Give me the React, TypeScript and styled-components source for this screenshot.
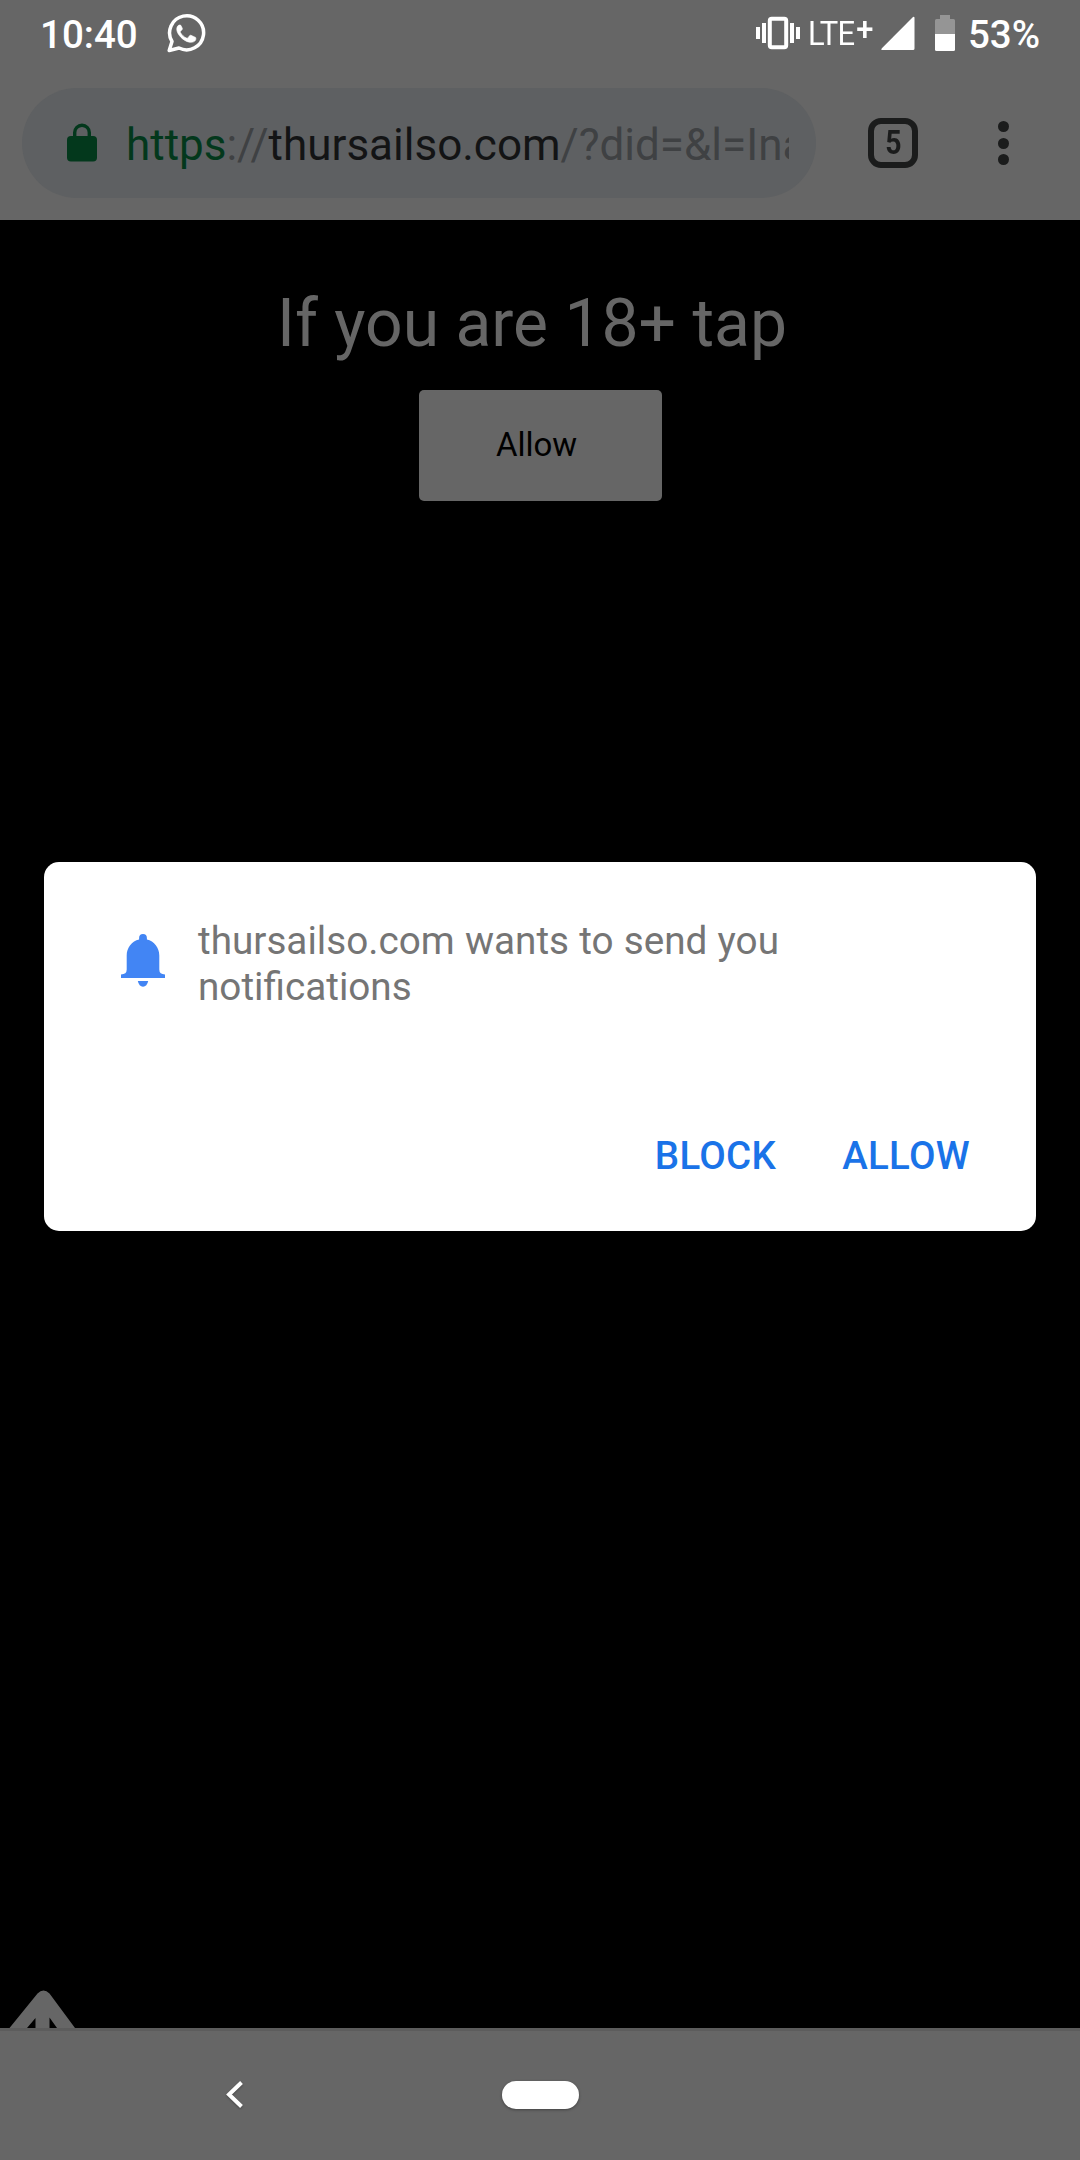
import React from "react";
import styled, { createGlobalStyle } from "styled-components";

const GlobalStyle = createGlobalStyle`
  *, *::before, *::after { box-sizing: border-box; }
  body { margin: 0; background: #000; }
  button { border: 0; padding: 0; background: none; font-family: inherit; }
  svg { display: block; flex: none; }
`;

const Screen = styled.div`
  position: relative;
  display: flex;
  flex-direction: column;
  width: 1080px;
  height: 2160px;
  overflow: hidden;
  background: #000;
  font-family: Roboto, "Liberation Sans", sans-serif;
`;

const StatusBar = styled.header`
  display: flex;
  align-items: flex-start;
  justify-content: space-between;
  height: 66px;
  padding: 13px 40px 0;
  background: #666;
  color: #fff;
`;

const StatusGroup = styled.div`
  display: flex;
  align-items: flex-start;
`;

const StatusText = styled.span<{ $gap?: number }>`
  margin-left: ${(p) => p.$gap ?? 0}px;
  font-size: 38.5px;
  font-weight: 500;
  line-height: 44px;
`;

const Network = styled.span`
  display: flex;
  width: 73px;
  margin-left: 8px;
  font-size: 34px;
  line-height: 40px;
  letter-spacing: -0.8px;
  transform: scaleX(0.91);
  transform-origin: left;
`;

const NetworkPlus = styled.sup`
  margin-left: 2px;
  font-size: 34px;
  font-weight: 500;
  line-height: 31px;
  vertical-align: baseline;
`;

const Toolbar = styled.div`
  display: flex;
  align-items: center;
  height: 154px;
  padding: 0 70px 0 22px;
  background: #666;
`;

const AddressBar = styled.div`
  display: flex;
  align-items: center;
  width: 794px;
  height: 110px;
  padding: 0 27px 0 45px;
  border-radius: 55px;
  background: #5e6062;
`;

const Url = styled.div`
  flex: 1;
  margin-left: 29px;
  padding-top: 4px;
  overflow: hidden;
  white-space: nowrap;
  font-size: 44px;
  line-height: 60px;
  color: #3f4143;
`;

const Scheme = styled.span`
  color: #03381c;
`;

const Host = styled.span`
  color: #131415;
`;

const TabButton = styled.button`
  display: flex;
  align-items: center;
  justify-content: center;
  width: 50px;
  height: 50px;
  margin-left: 52px;
  border: 6px solid #1b1c1c;
  border-radius: 13px;
  color: #1b1c1c;
`;

const TabCount = styled.span`
  font-size: 33px;
  font-weight: 700;
  line-height: 38px;
  transform: scaleX(0.86);
`;

const MenuButton = styled.button`
  display: flex;
  flex-direction: column;
  gap: 5.5px;
  margin-left: 79.5px;
`;

const Dot = styled.span`
  width: 11px;
  height: 11px;
  border-radius: 50%;
  background: #1b1c1c;
`;

const Page = styled.main`
  display: flex;
  flex: 1;
  flex-direction: column;
  align-items: center;
  padding-top: 64px;
  background: #000;
`;

const Heading = styled.h1`
  margin: 0;
  padding-right: 16px;
  font-size: 66px;
  font-weight: 400;
  line-height: 79px;
  color: #666;
`;

const PageButton = styled.button`
  width: 243px;
  height: 111px;
  margin: 27px 0 0 1px;
  padding: 0 8px 2px 0;
  border-radius: 5px;
  background: #666;
  font-size: 33px;
  color: #000;
`;

const ArrowSlot = styled.div`
  align-self: flex-start;
  margin-top: auto;
  padding-left: 9px;
`;

const NavBar = styled.nav`
  display: flex;
  align-items: center;
  height: 132px;
  padding: 0 0 2px 225px;
  border-top: 3px solid #5c5c5c;
  background: #666;
`;

const HomePill = styled.button`
  width: 77px;
  height: 28px;
  margin-left: 257px;
  border-radius: 14px;
  background: #fff;
  box-shadow: 0 1px 3px rgba(0, 0, 0, 0.35);
`;

const Modal = styled.div`
  position: absolute;
  inset: 862px 44px auto;
  display: flex;
  flex-direction: column;
  justify-content: space-between;
  height: 369px;
  padding: 56px 66px 52px 77px;
  border-radius: 15px;
  background: #fff;
`;

const Message = styled.div`
  display: flex;
  gap: 33px;
`;

const BellSlot = styled.div`
  padding-top: 16px;
`;

const MessageText = styled.p`
  width: 640px;
  margin: 0;
  font-size: 38.7px;
  word-spacing: 0.6px;
  line-height: 46px;
  color: #757575;
`;

const Actions = styled.div`
  display: flex;
  justify-content: flex-end;
  gap: 66px;
`;

const Action = styled.button`
  font-size: 38.5px;
  font-weight: 500;
  letter-spacing: 0.3px;
  line-height: 46px;
  color: #1a73e8;
`;

const WhatsAppIcon = () => (
  <svg width="40" height="40" viewBox="166 13 40 40">
    <path
      d="M169.2 50.5 L172 41.5 A17 17 0 1 1 179 48 Z"
      fill="none"
      stroke="#fff"
      strokeWidth="3.5"
      strokeLinejoin="round"
    />
    <path
      fill="#fff"
      stroke="#fff"
      strokeWidth="0.6"
      d="M179 25.1c-1.6.6-2.4 2.6-2.2 4.8.5 4.6 6.5 11.2 12.6 12.3 3 .5 5.6-.5 6.3-2.4.3-1.2.2-2-.1-2.4l-4.6-2.1c-.6-.2-1 0-1.3.3l-1.8 2.3c-.4.4-.8.4-1.3.2-2.6-1.1-4.8-3.2-6.2-5.7-.3-.5-.1-.9.2-1.2l1.6-1.8c.2-.4.2-.7.1-1.1l-1.5-3c-.3-.4-1.3-.4-1.8-.2z"
    />
  </svg>
);

const VibrateIcon = () => (
  <svg width="44" height="40" viewBox="756 13 44 40" fill="#fff">
    <rect x="756" y="27" width="4" height="12" />
    <rect x="762" y="23" width="4" height="20" />
    <rect x="769.8" y="18.8" width="16.4" height="28.4" rx="2" fill="none" stroke="#fff" strokeWidth="4" />
    <rect x="790" y="23" width="4" height="20" />
    <rect x="796" y="27" width="4" height="12" />
  </svg>
);

const SignalIcon = () => (
  <svg width="34" height="40" viewBox="880.5 13 34 40">
    <path d="M912.5 17 Q914 16.4 914 18 V48.5 Q914 50 912.5 50 H882 Q880 50 881.4 48.2 Z" fill="#fff" />
  </svg>
);

const BatteryIcon = () => (
  <svg width="20" height="40" viewBox="935 13 20 40">
    <path d="M940 15H950V19H953.5Q955 19 955 20.5V34H935V20.5Q935 19 936.5 19H940Z" fill="#959595" />
    <path d="M935 34H955V49.5Q955 51 953.5 51H936.5Q935 51 935 49.5Z" fill="#fff" />
  </svg>
);

const LockIcon = () => (
  <svg width="30" height="41" viewBox="0 0 30 41">
    <path d="M7.7 15V9.5a7.3 7.3 0 0 1 14.6 0V15" fill="none" stroke="#03381c" strokeWidth="3.4" />
    <rect y="13" width="30" height="25.5" rx="4" fill="#03381c" />
  </svg>
);

const BellIcon = () => (
  <svg width="44" height="53" viewBox="0 0 44 53" fill="#4285f4">
    <path d="M22 0a3.9 3.9 0 0 0-3.9 3.9V5.6C10.8 7.3 5.7 13.8 5.7 21.5V35.5Q5.7 40.4 0 40.4V44H44V40.4Q38.3 40.4 38.3 35.5V21.5C38.3 13.8 33.2 7.3 25.9 5.6V3.9A3.9 3.9 0 0 0 22 0Z" />
    <path d="M16.8 47H27.2Q26 52.7 22 52.7T16.8 47Z" />
  </svg>
);

const UpArrowIcon = () => (
  <svg width="67" height="38" viewBox="9 1990 67 38">
    <path
      d="M9.5 2028 L37.5 1993.5 Q43.5 1987.5 49.5 1993.5 L75 2028 H57 L49.5 2017.5 V2028 H35.5 V2018 L27 2028 Z"
      fill="#666"
    />
  </svg>
);

const BackIcon = () => (
  <svg width="20" height="30" viewBox="225 2080 20 30">
    <path
      d="M241.5 2082.5 L229 2094.5 L241.5 2106.5"
      fill="none"
      stroke="#fff"
      strokeWidth="4"
      filter="drop-shadow(0 1px 1px rgba(0,0,0,.3))"
    />
  </svg>
);

const Gap = styled.span<{ $size: number }>`
  width: ${(p) => p.$size}px;
`;

export default function App() {
  return (
    <>
      <GlobalStyle />
      <Screen>
        <StatusBar>
          <StatusGroup>
            <StatusText>10:40</StatusText>
            <Gap $size={28} />
            <WhatsAppIcon />
          </StatusGroup>
          <StatusGroup>
            <VibrateIcon />
            <Network>
              LTE<NetworkPlus>+</NetworkPlus>
            </Network>
            <SignalIcon />
            <Gap $size={20} />
            <BatteryIcon />
            <StatusText $gap={13}>53%</StatusText>
          </StatusGroup>
        </StatusBar>
        <Toolbar>
          <AddressBar>
            <LockIcon />
            <Url>
              <Scheme>https</Scheme>://<Host>thursailso.com</Host>/?did=&amp;l=Ina
            </Url>
          </AddressBar>
          <TabButton>
            <TabCount>5</TabCount>
          </TabButton>
          <MenuButton aria-label="Menu">
            <Dot />
            <Dot />
            <Dot />
          </MenuButton>
        </Toolbar>
        <Page>
          <Heading>If you are 18+ tap</Heading>
          <PageButton>Allow</PageButton>
          <ArrowSlot>
            <UpArrowIcon />
          </ArrowSlot>
        </Page>
        <NavBar>
          <BackIcon />
          <HomePill aria-label="Home" />
        </NavBar>
        <Modal role="dialog">
          <Message>
            <BellSlot>
              <BellIcon />
            </BellSlot>
            <MessageText>thursailso.com wants to send you notifications</MessageText>
          </Message>
          <Actions>
            <Action>BLOCK</Action>
            <Action>ALLOW</Action>
          </Actions>
        </Modal>
      </Screen>
    </>
  );
}
